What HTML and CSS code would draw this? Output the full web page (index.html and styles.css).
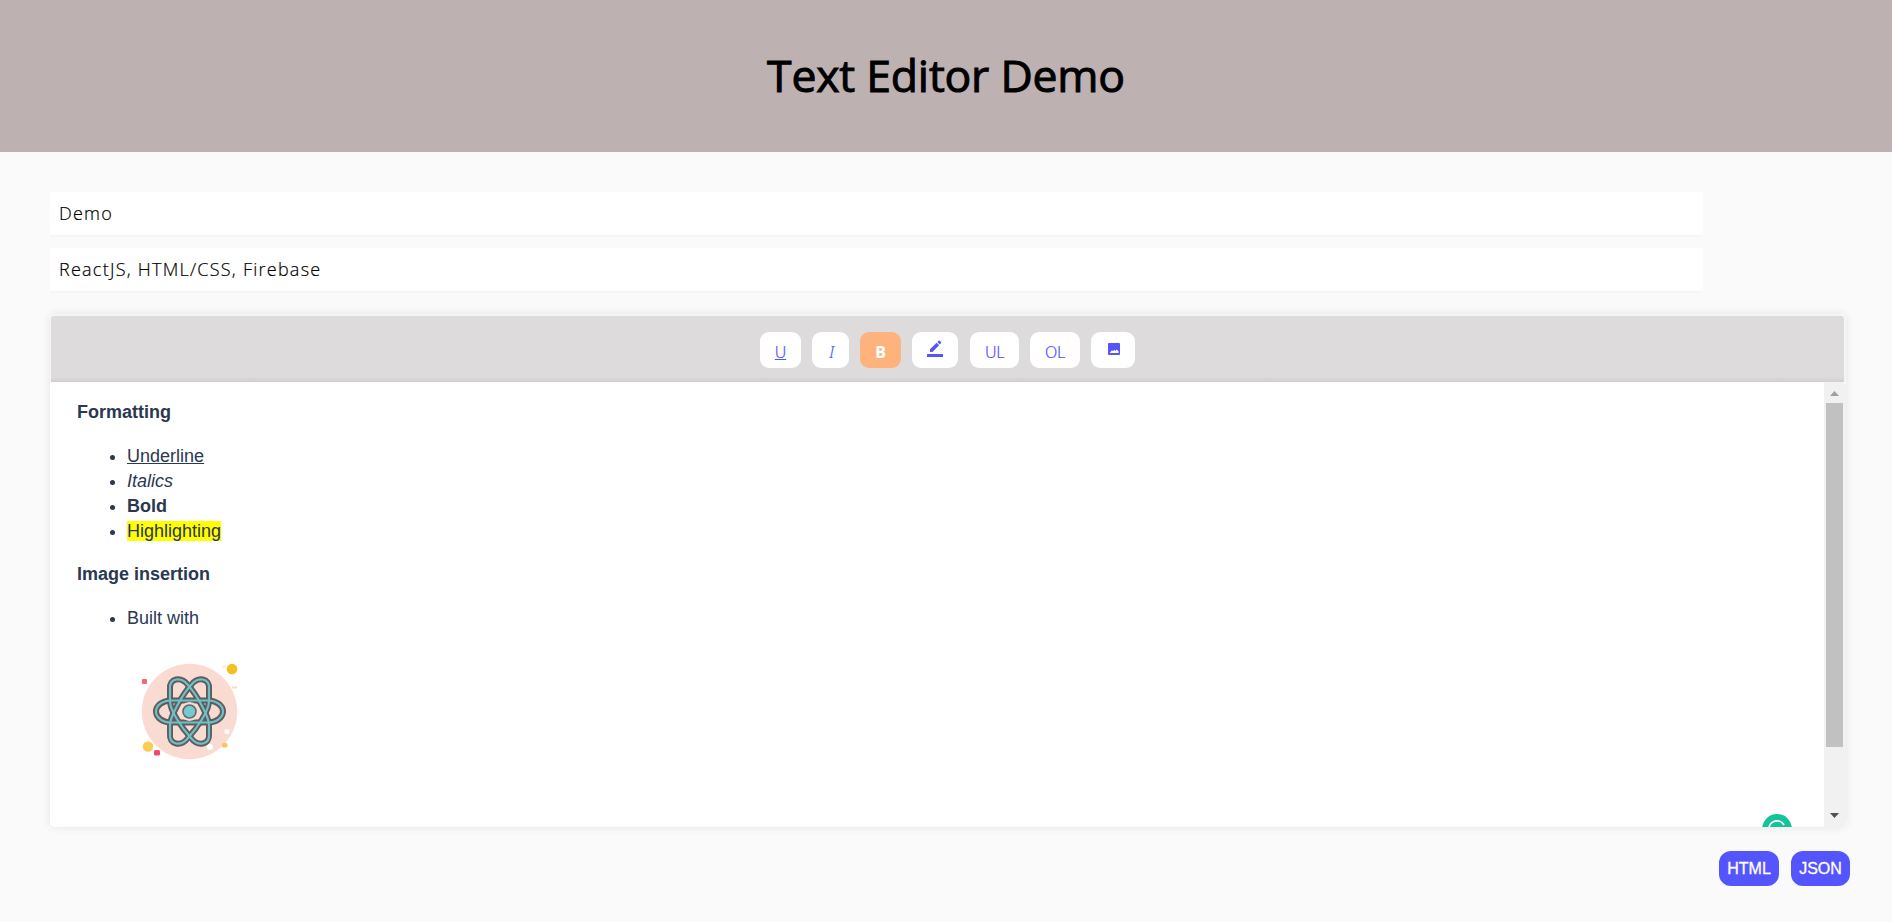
FILE: index.html
```html
<!DOCTYPE html>
<html lang="en">
<head>
<meta charset="utf-8">
<title>Text Editor Demo</title>
<link rel="stylesheet" href="styles.css">
</head>
<body>
<header class="header"><h1 class="title">Text Editor Demo</h1></header>
<main class="main">
  <div class="fields">
    <input class="field" type="text" value="Demo" aria-label="Title">
    <input class="field" type="text" value="ReactJS, HTML/CSS, Firebase" aria-label="Tags">
  </div>
  <section class="editor">
    <div class="toolbar">
      <button class="tool tool-u"><u>U</u></button>
      <button class="tool tool-i"><em>I</em></button>
      <button class="tool tool-b">B</button>
      <button class="tool tool-pen" aria-label="Highlight"><svg width="18" height="18" viewBox="0 0 18 18"><path fill="currentColor" d="M1 14h16v3H1zM4 9.200 10.600 2.800l2.500 2.400L6.500 12H4zM11.400 2l1.200-1.200q.6-.5 1.200 0l1.200 1.200q.5.600 0 1.200l-1.200 1.200z"/></svg></button>
      <button class="tool tool-ul">UL</button>
      <button class="tool tool-ol">OL</button>
      <button class="tool tool-img" aria-label="Image"><svg width="12" height="12" viewBox="0 0 12 12"><path fill="currentColor" fill-rule="evenodd" d="M1 0h10a1 1 0 0 1 1 1v10a1 1 0 0 1-1 1H1a1 1 0 0 1-1-1V1a1 1 0 0 1 1-1zM1.600 10h9V8.400L8.800 6.600 7.500 8 6.300 6.800 5 8.200 4 7.200z"/></svg></button>
    </div>
    <div class="body">
      <div class="content">
        <p><b>Formatting</b></p>
        <ul>
          <li><u>Underline</u></li>
          <li><em>Italics</em></li>
          <li><b>Bold</b></li>
          <li><mark>Highlighting</mark></li>
        </ul>
        <p><b>Image insertion</b></p>
        <ul><li>Built with</li></ul>
        <svg class="picture" width="100" height="100" viewBox="0 0 100 100">
          <circle cx="49.500" cy="50.500" r="47.700" fill="#f9dbd2"/>
          <g fill="none">
            <g stroke="#5b5d5e" stroke-width="6">
              <rect x="16" y="39.500" width="67" height="22" rx="15" ry="11"/>
              <path d="M30 40V28C29 17 41 15 48 24C57 34 69 56 69 64V73C70 84 58 86 51 77C42 67 30 50 30 40Z"/>
              <path d="M69 40V28C70 17 58 15 51 24C42 34 30 56 30 64V73C29 84 41 86 48 77C57 67 69 50 69 40Z"/>
            </g>
            <g stroke="#70bfc5" stroke-width="2.200">
              <rect x="16" y="39.500" width="67" height="22" rx="15" ry="11"/>
              <path d="M30 40V28C29 17 41 15 48 24C57 34 69 56 69 64V73C70 84 58 86 51 77C42 67 30 50 30 40Z"/>
              <path d="M69 40V28C70 17 58 15 51 24C42 34 30 56 30 64V73C29 84 41 86 48 77C57 67 69 50 69 40Z"/>
            </g>
          </g>
          <circle cx="49.500" cy="50.500" r="9.500" fill="#f9dbd2"/>
          <circle cx="49.500" cy="50.500" r="6.500" fill="#70cbd2" stroke="#686768" stroke-width="1.600"/>
          <circle cx="92" cy="8" r="5.300" fill="#f3c020"/>
          <circle cx="84" cy="5.500" r="1.800" fill="#fdf1cf"/>
          <circle cx="8" cy="85.500" r="5.300" fill="#fccd55"/>
          <rect x="2" y="18" width="5" height="5" rx="1" fill="#f26678"/>
          <rect x="14" y="89" width="6" height="5.500" rx="1.500" fill="#f04b66"/>
          <rect x="82" y="82" width="5.500" height="4.500" rx="1.500" fill="#f7c85c"/>
          <rect x="92" y="25.500" width="5" height="2" fill="#fbe0a0"/>
          <circle cx="87" cy="70.500" r="2.500" fill="#fff"/>
          <circle cx="70" cy="86" r="3" fill="#fff"/>
        </svg>
        <svg class="badge" width="30" height="13" viewBox="0 0 30 13"><circle cx="15" cy="15" r="15" fill="#15c39a"/><path d="M7 15a8 8 0 0 1 15-4" fill="none" stroke="#fff" stroke-width="1.800"/></svg>
      </div>
      <div class="scroll">
        <svg width="9" height="5" viewBox="0 0 9 5"><path fill="#a0a0a0" d="M0 5h9L4.500 0z"/></svg>
        <div class="thumb"></div>
        <svg class="down" width="9" height="5" viewBox="0 0 9 5"><path fill="#505050" d="M0 0h9L4.500 5z"/></svg>
      </div>
    </div>
  </section>
  <div class="actions"><button class="action action-html">HTML</button><button class="action action-json">JSON</button></div>
</main>
</body>
</html>
```
FILE: styles.css
```css
* { box-sizing: border-box; }
body { margin: 0; height: 922px; overflow: hidden; background: #fafafa; font-family: "Open Sans", sans-serif; }
.header { height: 152px; background: #bdb1b2; display: flex; justify-content: center; align-items: center; }
.title { margin: 0; padding-bottom: 2px; font-size: 44.500px; line-height: 60px; font-weight: 400; letter-spacing: -.2px; -webkit-text-stroke: 1px #000; color: #000; }
.main { padding: 40px 47px 0 50px; }
.fields { display: flex; flex-direction: column; gap: 11px; width: 1653px; }
.field { height: 45px; width: 100%; border: 0; border-bottom: 2px solid #f5f5fb; background: #fff; padding: 0 9px 1px; font: 300 18px "Open Sans", sans-serif; letter-spacing: 1.250px; color: #000; -webkit-text-stroke: .2px #000; outline: 0; }
.editor { margin-top: 21px; width: 1796px; height: 513px; display: flex; flex-direction: column; border-radius: 5px; box-shadow: 0 0 8px rgba(0,0,0,.09); }
.toolbar { height: 68px; flex: none; border: 2px solid #f4f5fb; border-left-width: 1px; border-bottom: 0; border-radius: 5px 5px 0 0; background: linear-gradient(#dddbdc 61px, #d0cecf); display: flex; justify-content: flex-start; padding: 16px 0 0 709px; gap: 11px; }
.tool { height: 36px; border: 0; border-radius: 9px; padding: 4px 0 0; background: #fff; color: #5555ff; font: 300 16px "Noto Sans", sans-serif; letter-spacing: -.3px; -webkit-text-stroke: .2px; display: flex; align-items: center; justify-content: center; }
.tool-u { width: 41px; }
.tool-i { width: 37px; padding-left: 2px; }
.tool-b { width: 41px; background: #ffb37c; color: #fff; font-weight: 700; }
.tool-pen { width: 46px; margin-right: 1px; align-items: flex-start; padding-top: 8px; }
.tool-ul { width: 49px; }
.tool-ol { width: 50px; }
.tool-img { width: 44px; align-items: flex-start; padding: 11px 0 0 2px; }
.body { flex: 1; display: flex; min-height: 0; background: #fff; border-radius: 5px; overflow: hidden; }
.content { flex: 1; position: relative; padding: 18px 27px; font: 18px/25px "Liberation Sans", Arial, sans-serif; color: #2a3850; }
.content p { margin: 0; }
.content ul { margin: 19px 0 18px; padding-left: 50px; }
mark { background: #ff0; color: inherit; }
.picture { display: block; margin: 30px 0 0 63px; filter: blur(.4px); }
.badge { position: absolute; right: 32px; bottom: 0; }
.scroll { width: 22px; background: #f1f1f1; display: flex; flex-direction: column; align-items: center; padding: 9px 1px 9px 0; }
.thumb { width: 17px; height: 344px; margin-top: 7px; background: #c1c1c1; }
.down { margin-top: auto; }
.actions { display: flex; justify-content: flex-end; gap: 12px; margin: 24px -5px 0 0; }
.action { height: 35px; border: 0; border-radius: 12px; padding: 0; background: #5555ff; color: #fff; font: 16px "Liberation Sans", Arial, sans-serif; -webkit-text-stroke: .3px #fff; }
.action-html { width: 60px; }
.action-json { width: 59px; }
```
